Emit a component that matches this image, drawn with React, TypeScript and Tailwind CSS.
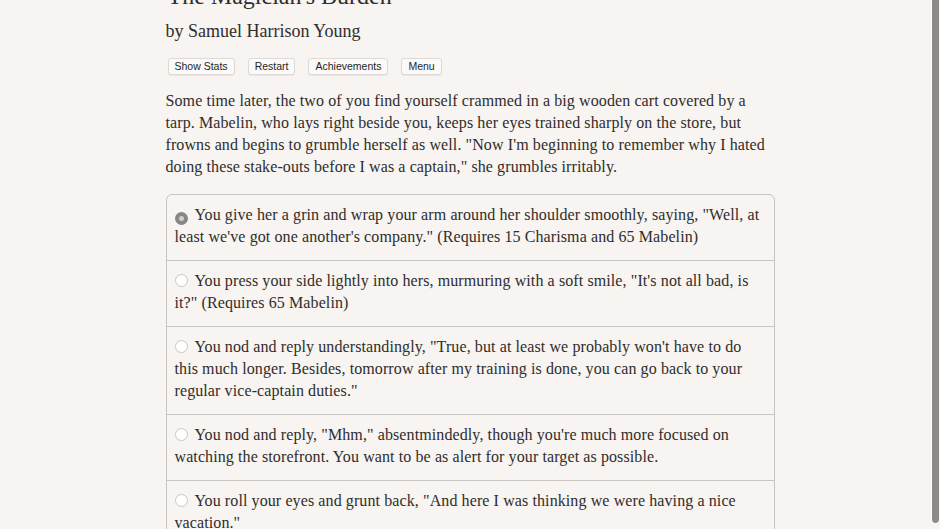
import React from 'react'

const options = [
  {
    text: 'You give her a grin and wrap your arm around her shoulder smoothly, saying, "Well, at least we\'ve got one another\'s company." (Requires 15 Charisma and 65 Mabelin)',
    selected: true,
  },
  {
    text: 'You press your side lightly into hers, murmuring with a soft smile, "It\'s not all bad, is it?" (Requires 65 Mabelin)',
  },
  {
    text: 'You nod and reply understandingly, "True, but at least we probably won\'t have to do this much longer. Besides, tomorrow after my training is done, you can go back to your regular vice-captain duties."',
  },
  {
    text: 'You nod and reply, "Mhm," absentmindedly, though you\'re much more focused on watching the storefront. You want to be as alert for your target as possible.',
  },
  {
    text: 'You roll your eyes and grunt back, "And here I was thinking we were having a nice vacation."',
  },
]

function Radio({ checked }: { checked?: boolean }) {
  if (checked) {
    return (
      <span className="inline-flex w-[13px] h-[13px] rounded-full bg-[#8a8685] items-center justify-center align-[-1px] mr-[7px]">
        <span className="w-[5px] h-[5px] rounded-full bg-[#cfcccb]" />
      </span>
    )
  }
  return (
    <span className="inline-block w-[13px] h-[13px] rounded-full bg-white border border-[#c9c6c4] align-[-1px] mr-[7px]" />
  )
}

export default function App() {
  const buttons = ['Show Stats', 'Restart', 'Achievements', 'Menu']

  return (
    <div className="relative h-[529px] overflow-hidden bg-[#f7f4f1] text-[#302d2c] font-['Liberation_Serif',serif]">
      <div className="w-[609px] mx-auto -mt-[19px]">
        <h1 className="text-[24px] leading-[30px] ml-[2px]">The Magician's Burden</h1>
        <h2 className="mt-[7px] text-[18px] leading-[26px]">by Samuel Harrison Young</h2>

        <div className="mt-[14px] flex gap-[13px] ml-[2px] font-['Liberation_Sans',sans-serif]">
          {buttons.map((b) => (
            <button
              key={b}
              className="h-[17px] px-[6px] text-[10.5px] leading-[15px] text-[#1f1f1f] bg-[#fbfaf9] border border-[#dedad8] rounded-[3px] shadow-[0_1px_1px_rgba(0,0,0,0.06)]"
            >
              {b}
            </button>
          ))}
        </div>

        <p className="mt-[15px] text-[16px] leading-[22px] tracking-[0.1px]">
          Some time later, the two of you find yourself crammed in a big wooden cart covered by a tarp. Mabelin, who lays
          right beside you, keeps her eyes trained sharply on the store, but frowns and begins to grumble herself as well.
          "Now I'm beginning to remember why I hated doing these stake-outs before I was a captain," she grumbles irritably.
        </p>

        <div className="mt-[16px] border border-[#c8c4c2] rounded-t-[6px]">
          {options.map((o, i) => (
            <div
              key={i}
              className={`pl-[8px] pr-[12px] pt-[9px] pb-[12px] text-[16px] leading-[22px] tracking-[0.1px] ${i > 0 ? 'border-t border-[#c8c4c2]' : ''}`}
            >
              <Radio checked={o.selected} />
              {o.text}
            </div>
          ))}
        </div>
      </div>

      <div className="absolute top-0 right-0 w-[11px] h-full flex justify-center">
        <div className="w-[8px] h-[523px] bg-[#8e8a89] border-l border-white rounded-b-[4px]" />
      </div>
    </div>
  )
}
